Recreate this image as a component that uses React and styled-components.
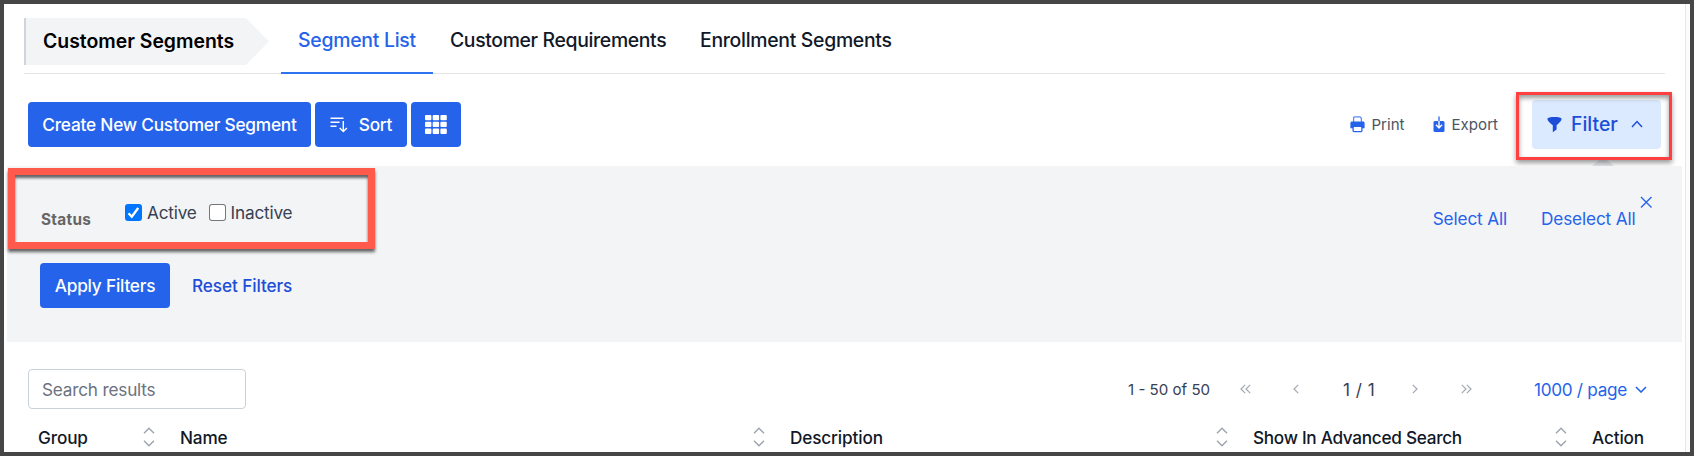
import { useState } from 'react'
import styled, { createGlobalStyle } from 'styled-components'

const columns = [
  { key: 1, value: 'Group', sort: true },
  { key: 2, value: 'Name', sort: true },
  { key: 3, value: 'Description', sort: true },
  { key: 4, value: 'Show In Advanced Search', sort: true, spacing: -0.29 },
  { key: 5, value: 'Action', sort: false },
]

const tabs = [
  { key: 1, value: 'Segment List', width: 152, spacing: -0.25 },
  { key: 2, value: 'Customer Requirements', width: 250, spacing: -0.35 },
  { key: 3, value: 'Enrollment Segments', width: 224, spacing: -0.29 },
]

function SortIcon() {
  return (
    <svg width="18" height="16" viewBox="0 0 18 16" fill="none" stroke="#fff" strokeWidth="1.4">
      <path d="M0.5 1.2H13.5M0.5 5.2H9.5M0.5 9.2H6.5" />
      <path d="M13.3 4V14.4M9.7 11L13.3 14.6L16.9 11" />
    </svg>
  )
}

function GridIcon() {
  return (
    <svg width="22" height="19" viewBox="0 0 22 19" fill="#fff">
      {[0, 6.8, 13.6].map(y =>
        [0, 7.7, 15.4].map(x => (
          <rect key={`${x}-${y}`} x={x} y={y} width="6.4" height="5.3" rx="1" />
        ))
      )}
    </svg>
  )
}

function PrintIcon() {
  return (
    <svg width="15" height="17" viewBox="0 0 15 17">
      <path d="M3.6 6V1.9C3.6 1.3 4 .9 4.6 .9H10L11.4 2.3V6" fill="#fff" stroke="#5b8cf2" strokeWidth="1.3" />
      <path d="M2 5.5H13C14.1 5.5 14.6 6.2 14.6 7.1V12.2H.4V7.1C.4 6.2 .9 5.5 2 5.5Z" fill="#2563eb" />
      <rect x="3.1" y="10.4" width="8.8" height="5.2" rx=".8" fill="#fff" stroke="#2563eb" strokeWidth="1.3" />
    </svg>
  )
}

function ExportIcon() {
  return (
    <svg width="12" height="17" viewBox="0 0 12 17">
      <rect x=".5" y="5" width="11" height="11" rx="1.5" fill="#2563eb" />
      <path d="M6 .6V6" fill="none" stroke="#2563eb" strokeWidth="1.3" />
      <path d="M6 5V12M3 8.8L6 12L9 8.8" fill="none" stroke="#fff" strokeWidth="1.4" />
    </svg>
  )
}

function FunnelIcon() {
  return (
    <svg width="15" height="17" viewBox="0 0 15 17" fill="#1d4ed8">
      <path d="M.4 2.8C.4 .3 14.6 .3 14.6 2.8C14.6 4.8 12.4 6.8 9.6 9.2V13.4L5.8 16.2V9.2C2.6 6.8 .4 4.8 .4 2.8Z" />
    </svg>
  )
}

function Chevron({ d, width, height, color, stroke = 1.5 }) {
  return (
    <svg width={width} height={height} viewBox={`0 0 ${width} ${height}`} fill="none" stroke={color} strokeWidth={stroke}>
      <path d={d} />
    </svg>
  )
}

export default function App() {
  const [active, setActive] = useState(true)
  const [inactive, setInactive] = useState(false)
  const [keyword, setKeyword] = useState('')

  return (
    <>
      <GlobalStyle />
      <Frame>
        <Page>
          <Header>
            <Crumb>Customer Segments</Crumb>
            <Tabs>
              {tabs.map((tab, index) => (
                <Tab key={tab.key} $active={index === 0} $width={tab.width} $spacing={tab.spacing}>{tab.value}</Tab>
              ))}
            </Tabs>
          </Header>

          <Toolbar>
            <Button $width={283}>Create New Customer Segment</Button>
            <Button $width={92}><SortIcon />Sort</Button>
            <Button $width={50}><GridIcon /></Button>
            <Tools>
              <Tool $gap={6}><PrintIcon />Print</Tool>
              <Tool $gap={7}><ExportIcon />Export</Tool>
              <FilterToggle>
                <FunnelIcon />
                <FilterLabel>Filter</FilterLabel>
                <Chevron d="M1 7L6 1.6L11 7" width={12} height={8} color="#1d4ed8" />
                <Pointer />
                <FilterMark />
              </FilterToggle>
            </Tools>
          </Toolbar>

          <Panel>
            <StatusMark />
            <StatusRow>
              <StatusLabel>Status</StatusLabel>
              <Options>
                <Option>
                  <HiddenBox type="checkbox" checked={active} onChange={() => setActive(!active)} />
                  <Box $checked={active}>{active && <Chevron d="M3.5 9.2L6.8 12.7L13.2 4" width={17} height={17} color="#fff" stroke={2.4} />}</Box>
                  Active
                </Option>
                <Option>
                  <HiddenBox type="checkbox" checked={inactive} onChange={() => setInactive(!inactive)} />
                  <Box $checked={inactive}>{inactive && <Chevron d="M3.5 9.2L6.8 12.7L13.2 4" width={17} height={17} color="#fff" stroke={2.4} />}</Box>
                  Inactive
                </Option>
              </Options>
              <SelectLinks>
                <PlainLink>Select All</PlainLink>
                <PlainLink>Deselect All</PlainLink>
              </SelectLinks>
              <Close>
                <Chevron d="M1 1L11.5 11.5M11.5 1L1 11.5" width={12.5} height={12.5} color="#2563eb" stroke={1.4} />
              </Close>
            </StatusRow>
            <Actions>
              <Button $width={130}>Apply Filters</Button>
              <ResetLink>Reset Filters</ResetLink>
            </Actions>
          </Panel>

          <ResultBar>
            <Search
              value={keyword}
              onChange={event => setKeyword(event.target.value)}
              placeholder="Search results" />
            <Pager>
              <Count>1 - 50 of 50</Count>
              <PageArrow $width={53}><Chevron d="M5.2 .8L1 5L5.2 9.2M10.2 .8L6 5L10.2 9.2" width={11} height={10} color="#a3a8b2" stroke={1.2} /></PageArrow>
              <PageArrow $width={50}><Chevron d="M5.2 .8L1 5L5.2 9.2" width={6} height={10} color="#a3a8b2" stroke={1.2} /></PageArrow>
              <Current>1 / 1</Current>
              <PageArrow $width={49}><Chevron d="M.8 .8L5 5L.8 9.2" width={6} height={10} color="#a3a8b2" stroke={1.2} /></PageArrow>
              <PageArrow $width={73}><Chevron d="M.8 .8L5 5L.8 9.2M5.8 .8L10 5L5.8 9.2" width={11} height={10} color="#a3a8b2" stroke={1.2} /></PageArrow>
              <PageSize>1000 / page</PageSize>
              <Chevron d="M1 1L6 6L11 1" width={12} height={7} color="#2563eb" stroke={1.6} />
            </Pager>
          </ResultBar>

          <TableHead>
            {columns.map(column => (
              <HeadCell key={column.key} $spacing={column.spacing}>
                {column.value}
                {column.sort && (
                  <Chevron d="M1 6.2L6 1.2L11 6.2M1 13.8L6 18.8L11 13.8" width={12} height={20} color="#9ca3af" stroke={1.4} />
                )}
              </HeadCell>
            ))}
          </TableHead>
        </Page>
        <ScrollTrack />
      </Frame>
    </>
  )
}

const GlobalStyle = createGlobalStyle`
  * {
    box-sizing: border-box;
  }
  body {
    margin: 0;
    overflow: hidden;
    font-family: Inter, sans-serif;
    background-color: #fff;
  }
  button, input {
    font-family: inherit;
  }
  svg {
    display: block;
    flex: none;
  }
`

const Frame = styled.div`
  display: flex;
  width: 1694px;
  height: 456px;
  border: 4px solid #464646;
  background-color: #fff;
  overflow: hidden;
`

const Page = styled.main`
  flex: 1;
  white-space: nowrap;
`

const ScrollTrack = styled.div`
  width: 5px;
  border-left: 1px solid #e5e7eb;
  background-color: #fcfcfc;
`

const Header = styled.header`
  display: flex;
  height: 70px;
  margin: 0 20px 0 20px;
  padding-top: 14px;
  border-bottom: 1px solid #e3e5e8;
`

const Crumb = styled.div`
  width: 245px;
  height: 47px;
  padding-left: 17px;
  border-left: 2px solid #d1d5db;
  background-color: #f3f4f6;
  clip-path: polygon(0 0, 222px 0, 100% 50%, 222px 100%, 0 100%);
  font-size: 19.4px;
  font-weight: 600;
  line-height: 47px;
  color: #000;
`

const Tabs = styled.nav`
  display: flex;
  margin: -14px 0 0 12px;
`

const Tab = styled.div`
  width: ${({ $width }) => $width}px;
  height: 70px;
  padding-left: 17px;
  border-bottom: 2px solid ${({ $active }) => ($active ? '#2f73f0' : 'transparent')};
  color: ${({ $active }) => ($active ? '#2563eb' : '#111827')};
  font-size: 19.4px;
  font-weight: 500;
  letter-spacing: ${({ $spacing }) => $spacing}px;
  line-height: 73px;
`

const Toolbar = styled.div`
  display: flex;
  align-items: center;
  gap: 4px;
  height: 92px;
  padding: 17px 24px 8px 24px;
`

const Button = styled.button`
  display: flex;
  flex: none;
  align-items: center;
  justify-content: center;
  gap: 11px;
  width: ${({ $width }) => $width}px;
  height: 45px;
  padding: 0;
  border: 0;
  border-radius: 4px;
  background-color: #2563eb;
  color: #fff;
  font-size: 17.3px;
  font-weight: 500;
  letter-spacing: -0.23px;
  cursor: pointer;
`

const Tools = styled.div`
  display: flex;
  align-items: center;
  margin-left: auto;
`

const Tool = styled.div`
  display: flex;
  align-items: center;
  gap: ${({ $gap }) => $gap}px;
  margin-right: ${({ $gap }) => ($gap === 6 ? 28 : 34)}px;
  padding-bottom: 1px;
  color: #4b5563;
  font-size: 15.1px;
`

const FilterToggle = styled.div`
  position: relative;
  display: flex;
  align-items: center;
  width: 129px;
  height: 49px;
  padding: 0 0 1px 15px;
  border-radius: 4px;
  background-color: #dbeafe;
  color: #1d4ed8;
`

const FilterLabel = styled.span`
  width: 60px;
  margin-left: 9px;
  font-size: 19.4px;
  font-weight: 500;
`

// small arrow that ties the panel to the toggle
const Pointer = styled.span`
  position: absolute;
  left: 60px;
  top: 57px;
  border: 11px solid transparent;
  border-top: 0;
  border-bottom: 9px solid #e5e7eb;
`

const FilterMark = styled.span`
  position: absolute;
  left: -16px;
  top: -8px;
  width: 156px;
  height: 68px;
  border: 3px solid #ff4040;
  box-shadow: 0 3px 5px rgba(0, 0, 0, 0.4), inset 0 3px 5px rgba(0, 0, 0, 0.4);
`

const Panel = styled.section`
  position: relative;
  height: 176px;
  margin: 0 3px;
  padding: 30px 0 0 33px;
  background-color: #f3f4f6;
`

const StatusMark = styled.span`
  position: absolute;
  left: 1px;
  top: 2px;
  width: 367px;
  height: 81px;
  border: 7px solid #ff5a4b;
  box-shadow: 0 3px 3px rgba(0, 0, 0, 0.6), inset 0 3px 3px rgba(0, 0, 0, 0.6);
  pointer-events: none;
`

const StatusRow = styled.div`
  display: flex;
  height: 67px;
`

const StatusLabel = styled.div`
  width: 85px;
  padding: 8px 0 0 1px;
  color: #666;
  font-size: 15.3px;
  font-weight: 700;
  letter-spacing: 0.3px;
  line-height: 31px;
`

const Options = styled.div`
  display: flex;
  gap: 12px;
`

const Option = styled.label`
  display: flex;
  align-items: center;
  height: 33px;
  color: #374151;
  font-size: 17.2px;
  letter-spacing: -0.2px;
`

const HiddenBox = styled.input`
  appearance: none;
  width: 0;
  height: 0;
  margin: 0;
`

const Box = styled.span`
  width: 17px;
  height: 17px;
  margin-right: 5px;
  border-radius: 3px;
  background-color: ${({ $checked }) => ($checked ? '#0075ff' : '#fff')};
  box-shadow: ${({ $checked }) => ($checked ? 'none' : 'inset 0 0 0 1px #767676')};
`

const SelectLinks = styled.div`
  display: flex;
  gap: 34px;
  margin-left: auto;
`

const PlainLink = styled.a`
  color: #2563eb;
  font-size: 17.2px;
  letter-spacing: -0.14px;
  line-height: 46px;
  cursor: pointer;
`

const Close = styled.div`
  margin-left: 4px;
  margin-right: 30px;
`

const Actions = styled.div`
  display: flex;
  align-items: center;
  gap: 22px;
`

const ResetLink = styled.a`
  color: #1d4ed8;
  font-size: 17.2px;
  font-weight: 500;
  letter-spacing: -0.1px;
  cursor: pointer;
`

const ResultBar = styled.div`
  display: flex;
  align-items: center;
  height: 80px;
  padding: 14px 38px 0 24px;
`

const Search = styled.input`
  width: 218px;
  height: 40px;
  padding: 0 13px;
  border: 1px solid #cbd1d9;
  border-radius: 4px;
  outline: none;
  font-size: 17.2px;
  letter-spacing: -0.2px;
  color: #374151;
  &::placeholder {
    color: #6b7280;
  }
`

const Pager = styled.div`
  display: flex;
  align-items: center;
  margin-left: auto;
  color: #374151;
`

const Count = styled.span`
  width: 112px;
  font-size: 15.1px;
`

const PageArrow = styled.span`
  width: ${({ $width }) => $width}px;
`

const Current = styled.span`
  width: 69px;
  font-size: 17.2px;
  letter-spacing: 0.5px;
`

const PageSize = styled.span`
  width: 101px;
  color: #2563eb;
  font-size: 17.2px;
  letter-spacing: -0.3px;
`

const TableHead = styled.div`
  display: grid;
  grid-template-columns: 142px 610px 463px 339px 80px;
  padding-left: 34px;
`

const HeadCell = styled.div`
  display: flex;
  align-items: center;
  justify-content: space-between;
  height: 30px;
  padding-right: 25px;
  color: #111827;
  font-size: 17.2px;
  font-weight: 500;
  letter-spacing: ${({ $spacing }) => $spacing || -0.14}px;
`
